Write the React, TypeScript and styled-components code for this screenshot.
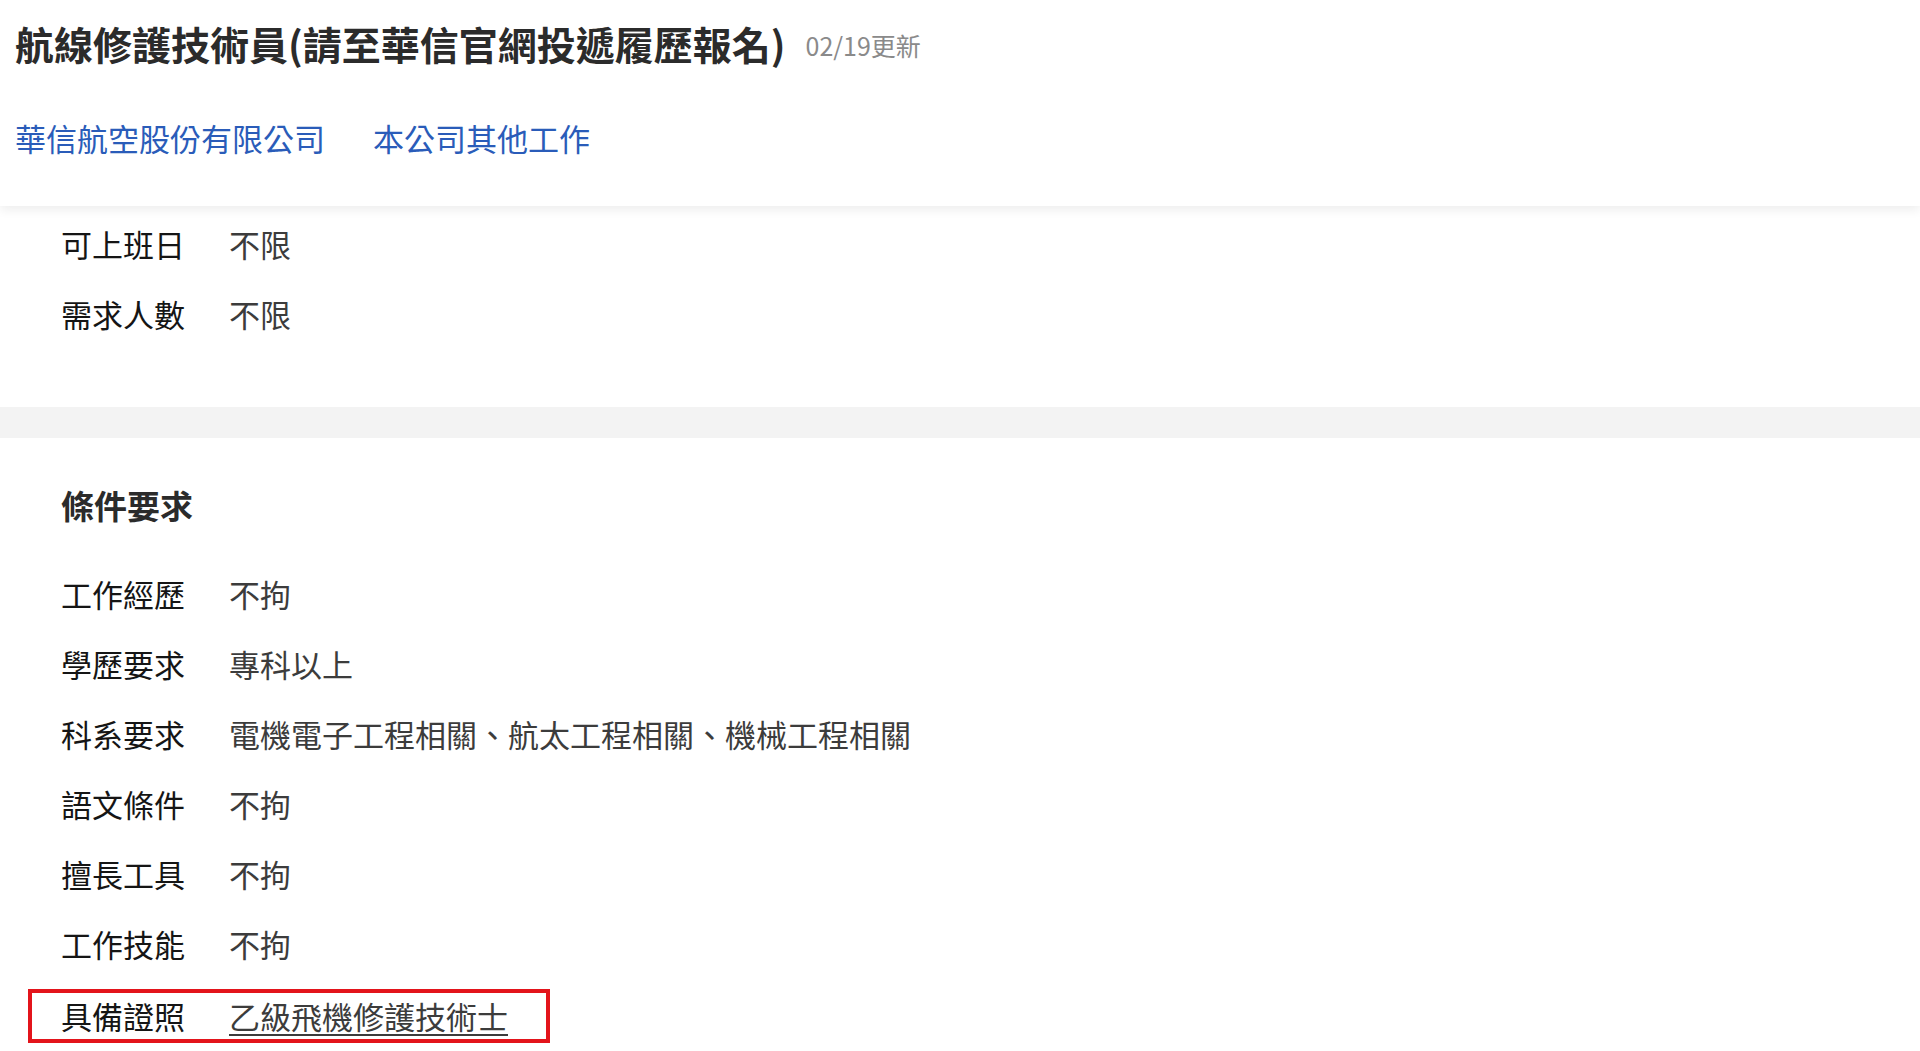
import React from "react";
import styled, { createGlobalStyle } from "styled-components";

const GlobalStyle = createGlobalStyle`
  html, body {
    margin: 0;
    padding: 0;
    background: #ffffff;
  }
  body {
    font-family: "Noto Sans CJK TC", "Noto Sans", "Liberation Sans", sans-serif;
    color: #292929;
  }
`;

const Page = styled.div`
  width: 1920px;
  min-height: 1051px;
  background: #ffffff;
  overflow: hidden;
`;

const Header = styled.header`
  height: 206px;
  box-sizing: border-box;
  padding: 17px 15px 0;
  background: #ffffff;
  box-shadow: 0 4px 10px rgba(0, 0, 0, 0.07);
  position: relative;
  z-index: 1;
  display: flex;
  flex-direction: column;
`;

const TitleRow = styled.div`
  display: flex;
  align-items: center;
  gap: 20px;
  height: 52px;
`;

const Title = styled.h1`
  margin: 0;
  font-size: 39px;
  line-height: 52px;
  font-weight: 700;
  color: #2b2b2b;
`;

const UpdateDate = styled.span`
  font-size: 25px;
  line-height: 52px;
  padding-top: 4px;
  color: #8a8a8a;
`;

const LinkRow = styled.nav`
  display: flex;
  gap: 48px;
  margin-top: 44px;
  height: 50px;
  align-items: center;
`;

const CompanyLink = styled.a`
  font-size: 31px;
  line-height: 50px;
  color: #2a5cb9;
  text-decoration: none;
`;

const Section = styled.section<{ $top: number; $bottom: number }>`
  padding: ${(p) => p.$top}px 0 ${(p) => p.$bottom}px 61px;
  display: flex;
  flex-direction: column;
`;

const Divider = styled.div`
  height: 31px;
  background: #f3f3f3;
`;

const SectionTitle = styled.h2`
  margin: 0 0 19px;
  height: 70px;
  box-sizing: border-box;
  padding-bottom: 4px;
  line-height: 66px;
  font-size: 33px;
  font-weight: 700;
  color: #2b2b2b;
`;

const Row = styled.div`
  display: flex;
  align-items: center;
  height: 70px;
  box-sizing: border-box;
  padding-bottom: 5px;
`;

const Label = styled.div`
  width: 168px;
  flex: none;
  font-size: 31px;
  font-weight: 400;
  color: #151515;
`;

const Value = styled.div<{ $underline?: boolean }>`
  font-size: 31px;
  color: #3c3c3c;
  text-decoration: ${(p) => (p.$underline ? "underline" : "none")};
  text-underline-offset: 5px;
  text-decoration-thickness: 2px;
`;

const Highlight = styled.div`
  display: flex;
  align-items: center;
  height: 54px;
  box-sizing: border-box;
  margin-left: -33px;
  margin-top: 5px;
  padding: 0 38px 2px 29px;
  border: 4px solid #e3141b;
`;

type Item = { label: string; value: string };

const basics: Item[] = [
  { label: "可上班日", value: "不限" },
  { label: "需求人數", value: "不限" },
];

const requirements: Item[] = [
  { label: "工作經歷", value: "不拘" },
  { label: "學歷要求", value: "專科以上" },
  { label: "科系要求", value: "電機電子工程相關、航太工程相關、機械工程相關" },
  { label: "語文條件", value: "不拘" },
  { label: "擅長工具", value: "不拘" },
  { label: "工作技能", value: "不拘" },
];

export default function App() {
  return (
    <Page>
      <GlobalStyle />
      <Header>
        <TitleRow>
          <Title>航線修護技術員(請至華信官網投遞履歷報名)</Title>
          <UpdateDate>02/19更新</UpdateDate>
        </TitleRow>
        <LinkRow>
          <CompanyLink href="#">華信航空股份有限公司</CompanyLink>
          <CompanyLink href="#">本公司其他工作</CompanyLink>
        </LinkRow>
      </Header>

      <Section $top={5} $bottom={56}>
        {basics.map((it) => (
          <Row key={it.label}>
            <Label>{it.label}</Label>
            <Value>{it.value}</Value>
          </Row>
        ))}
      </Section>

      <Divider />

      <Section $top={34} $bottom={0}>
        <SectionTitle>條件要求</SectionTitle>
        {requirements.map((it) => (
          <Row key={it.label}>
            <Label>{it.label}</Label>
            <Value>{it.value}</Value>
          </Row>
        ))}
        <Row>
          <Highlight>
            <Label>具備證照</Label>
            <Value $underline>乙級飛機修護技術士</Value>
          </Highlight>
        </Row>
      </Section>
    </Page>
  );
}
